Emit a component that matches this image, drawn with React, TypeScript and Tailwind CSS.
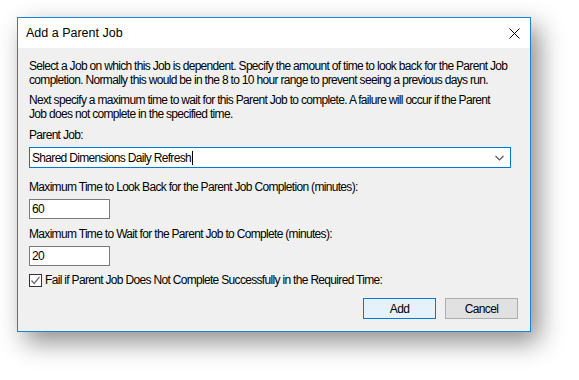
export default function App() {
  return (
    <div className="w-[579px] h-[380px] bg-white overflow-hidden font-['Liberation_Sans',Arial,sans-serif] text-[12px] text-black tracking-[-0.68px]">
      <div className="ml-[17px] mt-[17px] w-[514px] h-[315px] border border-[#1883d7] bg-[#f0f0f0] shadow-[8px_10px_24px_rgba(0,0,0,0.45)] flex flex-col">
        {/* Title bar */}
        <div className="h-[30px] bg-white flex items-center justify-between pl-[8px] pr-[10px]">
          <span className="text-[12.5px] leading-none tracking-[0px]">Add a Parent Job</span>
          <svg width="11" height="11" viewBox="0 0 11 11">
            <path d="M0.5 0.5 L10.5 10.5 M10.5 0.5 L0.5 10.5" stroke="#000" strokeWidth="1" />
          </svg>
        </div>

        {/* Body */}
        <div className="flex flex-col px-[11px] pt-[11px] leading-[14px] whitespace-nowrap">
          <p>
            Select a Job on which this Job is dependent. Specify the amount of time to look back for the Parent Job
            <br />
            completion. Normally this would be in the 8 to 10 hour range to prevent seeing a previous days run.
          </p>
          <p className="mt-[6px]">
            Next specify a maximum time to wait for this Parent Job to complete. A failure will occur if the Parent
            <br />
            Job does not complete in the specified time.
          </p>

          <label className="mt-[7px]">Parent Job:</label>
          <div className="mt-[5px] h-[21px] w-[482px] bg-white border border-[#0078d7] flex items-center justify-between pl-[2px] pr-[6px]">
            <span className="flex items-center">
              Shared Dimensions Daily Refresh
              <span className="inline-block w-px h-[14px] bg-black ml-[1px]" />
            </span>
            <svg width="9" height="6" viewBox="0 0 9 6">
              <path d="M0.5 1 L4.5 5 L8.5 1" fill="none" stroke="#5a5a5a" strokeWidth="1.2" />
            </svg>
          </div>

          <label className="mt-[12px]">Maximum Time to Look Back for the Parent Job Completion (minutes):</label>
          <div className="mt-[5px] h-[20px] w-[81px] bg-white border border-[#7a7a7a] flex items-center pl-[2px]">60</div>

          <label className="mt-[8px]">Maximum Time to Wait for the Parent Job to Complete (minutes):</label>
          <div className="mt-[5px] h-[20px] w-[81px] bg-white border border-[#7a7a7a] flex items-center pl-[2px]">20</div>

          <div className="mt-[7px] flex items-center">
            <span className="w-[13px] h-[13px] bg-white border border-[#333] flex items-center justify-center">
              <svg width="11" height="11" viewBox="0 0 11 11">
                <path d="M1.5 5.5 L4.2 8.5 L9.5 1.8" fill="none" stroke="#6d6d6d" strokeWidth="1.3" />
              </svg>
            </span>
            <span className="ml-[3px]">Fail if Parent Job Does Not Complete Successfully in the Required Time:</span>
          </div>

          <div className="mt-[11px] flex justify-end gap-[9px] pr-[1px]">
            <button className="w-[73px] h-[21px] bg-[#e5f1fb] border border-[#0078d7] flex items-center justify-center">
              Add
            </button>
            <button className="w-[73px] h-[21px] bg-[#e1e1e1] border border-[#adadad] flex items-center justify-center">
              Cancel
            </button>
          </div>
        </div>
      </div>
    </div>
  );
}
